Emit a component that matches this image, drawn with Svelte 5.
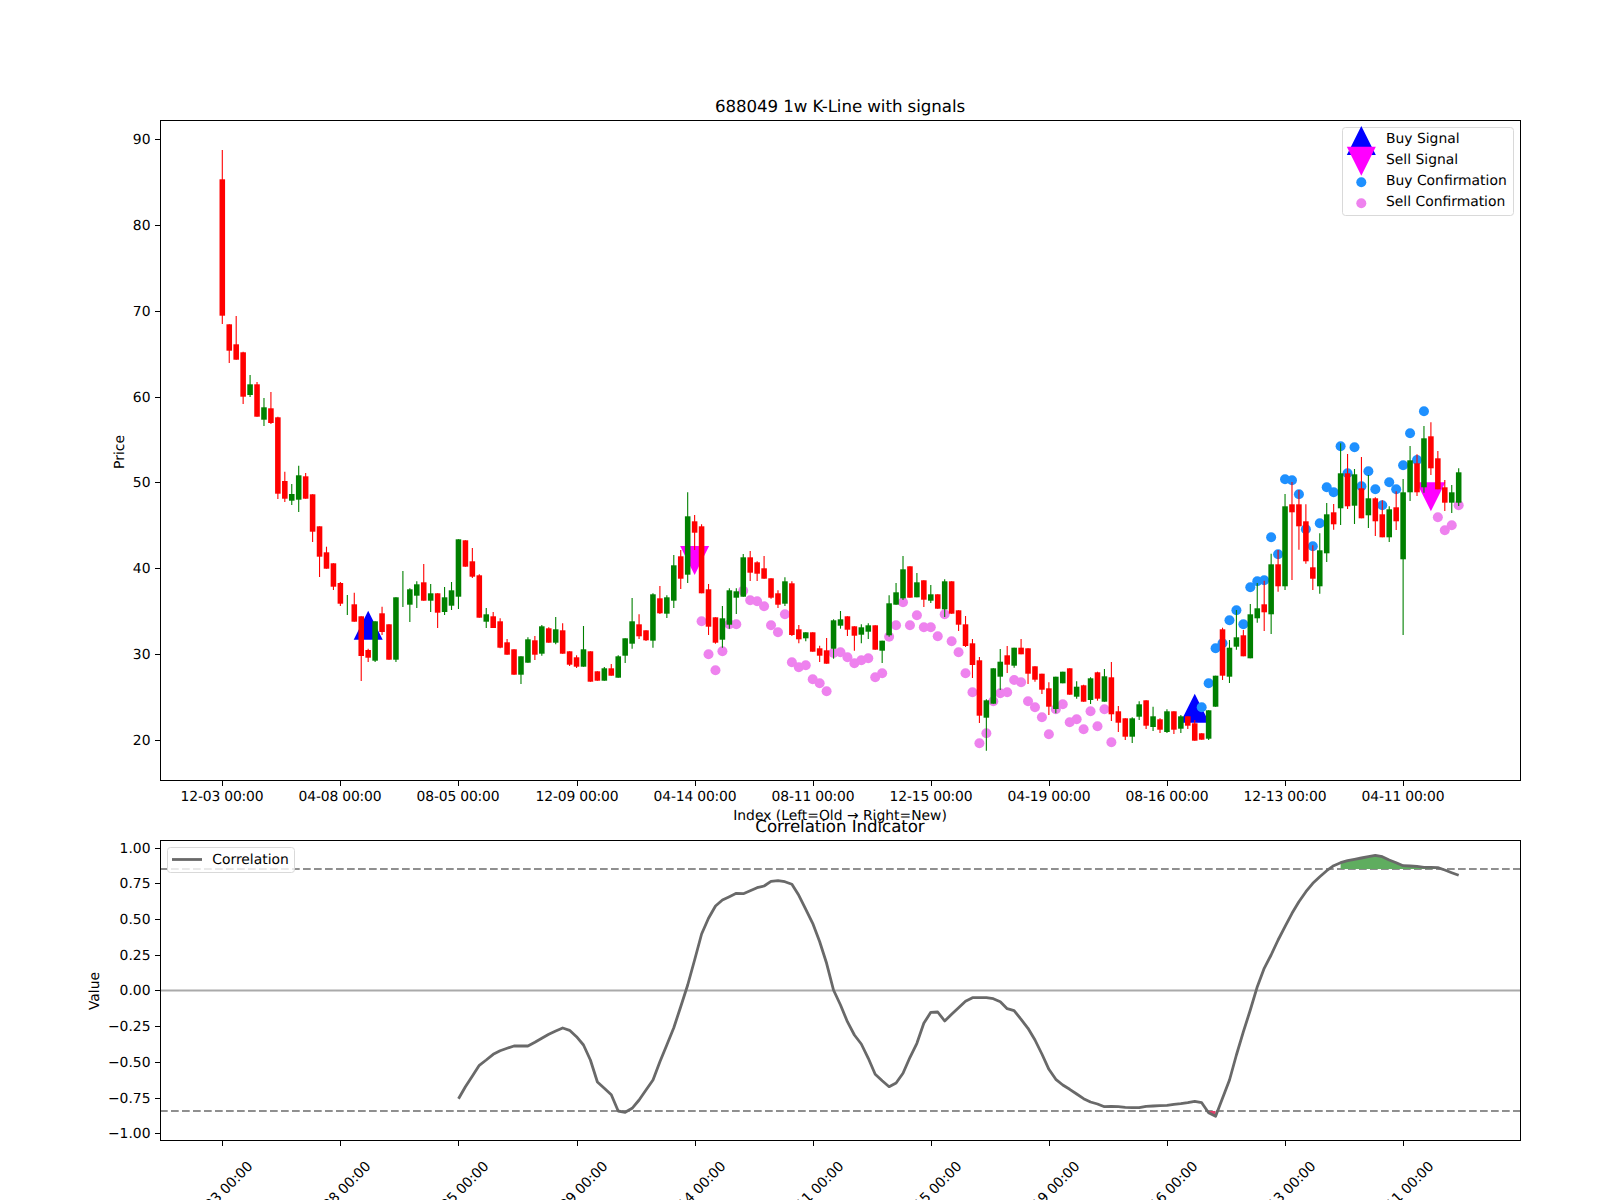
<script>
	// all series are in figure pixels, read off a 1600x1200 chart
	const X0 = 222.3;
	const STEP = 6.946;
	const BODY_W = 5.56;
	const x = (i) => X0 + STEP * i;

	// [colour, wick top, body top, body bottom, wick bottom]
	const candles = [
		['r',150,179.3,315.7,324],['r',324.3,324.3,350.7,363],['r',316,344.3,359.7,359.7],['r',351.7,352.3,396.7,404],
		['g',375,384.3,395,397],['r',382,384.3,416.7,416.7],['g',398,407.3,419.7,426],['r',392,408.3,423,424],
		['r',416.7,417.3,493.7,499],['r',471.7,481,498.7,502],['g',484,494,500.7,505],['g',465.7,475.3,499.7,512],
		['r',473,476.3,498.7,498.7],['r',494.3,494.3,531.7,542],['r',526.3,526.3,556.7,577],['r',546.7,552.3,568.7,568.7],
		['r',563.3,563.3,586.7,590],['r',582,583,603.7,606],['g',595,605,605,615],['r',592.7,604.3,621.7,621.7],
		['r',616.3,616.3,656,681],['r',648.7,650,657.7,662],['g',621.3,621.3,660.7,662],['r',606.7,613.3,632,635],
		['r',624.3,624.3,659.7,659.7],['g',597.3,597.3,659.7,662],['g',571,590,590,607],['g',588.3,589.3,604.7,622],
		['g',581.3,584.3,595.7,608],['r',564,582.3,600.7,600.7],['g',584,593.3,600.7,612],['r',593.3,593.3,612.7,628],
		['g',587,597.3,612,615],['g',582,590.3,605.7,610],['g',539.3,539.3,596.7,609],['r',540.3,540.3,566.7,566.7],
		['r',548,561.3,576.7,578],['r',574.3,575.3,617.7,617.7],['g',608,614.3,621.7,628],['r',612,616.3,628,628],
		['r',618.3,621.3,647.7,648.3],['r',639,642.3,654.7,654.7],['r',649.3,649.3,674.7,674.7],['g',656.3,656.3,674.7,684],
		['g',637.3,639.3,662.7,662.7],['r',636,640.3,654.7,660],['g',625,626.3,653.7,655.7],['r',627.3,628.3,642.7,642.7],
		['g',617,629.3,642.7,644.3],['r',623.3,630.3,653.7,653.7],['r',651.3,651.3,664.7,666],['r',655.3,657.3,666.7,668],
		['g',626,649.3,666.7,666.7],['r',651.3,651.3,681.7,681.7],['r',671.3,671.3,680.7,680.7],['g',667,668.3,680.7,680.7],
		['r',664,668.3,675.7,675.7],['g',655.3,656.3,677.7,677.7],['g',638.3,638.3,655.7,663],['g',598,621.3,643.7,648.7],
		['r',614.3,624.3,636.3,639],['r',630.3,630.3,640.3,641],['g',593.3,594.3,640.7,647.7],['r',586,598.3,613.3,614],
		['g',595.3,597.3,613.7,618],['g',555,565.3,600.7,608],['r',550,556.3,578.7,589],['g',492.3,516.3,574.7,583],
		['r',515,521.3,532.7,550],['r',524.3,526.3,593.3,593.3],['r',584,589.3,626.7,635],['r',617.3,617.3,642.7,643.7],
		['g',606,618.3,639.7,647.7],['g',588.3,590.3,624.7,628.7],['g',588.3,591.3,597.7,614],['g',554,557.3,596.7,596.7],
		['r',551,557.3,572.7,581],['r',561.3,562.3,573.7,581],['r',556,568.3,578.7,578.7],['r',578.3,578.3,597.7,598.7],
		['r',590.3,593.3,604.7,608],['g',577.3,581.3,603.7,606],['r',581.3,583.3,635,636],['r',625,629.3,639.3,643.3],
		['g',632.3,632.3,638.3,641.3],['r',632.3,632.3,651.7,651.7],['r',645.7,648.3,655.7,662],['r',638,650.3,663.7,663.7],
		['g',619.3,620.3,648.7,658.7],['g',611,619.3,625.7,628.7],['r',616.3,616.3,629.7,636],['r',626.3,626.3,635.7,650.7],
		['g',624.3,627.3,634.7,643.3],['g',623.3,625.3,631.7,639],['r',625.3,625.3,649.7,649.7],['g',640.7,640.7,650.7,663],
		['g',595.3,603.3,635.3,636.7],['g',583,592.3,604.7,604.7],['g',556,569.3,598.3,600],['r',566.3,566.3,597.7,597.7],
		['g',573,582.3,597.3,597.3],['r',580.3,580.3,599.7,607],['g',585,594.3,600.7,603],['r',594.3,594.3,608.7,608.7],
		['g',579.3,581.3,609.3,617],['r',581.3,581.3,613.7,613.7],['r',610.3,610.3,624.7,631],['r',616,624.3,646,647],
		['r',639,643.3,665,678],['r',657,660.3,715.7,723],['g',699.3,700.3,717.7,750.7],['g',668.3,668.3,703.7,703.7],
		['g',649,661.7,676.7,690],['r',646,655.3,664.7,673],['g',647.7,647.7,665.7,667.7],['r',639,647.7,654.3,654.3],
		['r',648.3,648.3,673.7,684],['r',666.3,666.3,679.7,681.7],['r',673.7,673.7,689.7,694],['r',682.3,688.3,706.7,715],
		['g',676.7,676.7,709,713.3],['g',671.7,671.7,683.3,683.3],['r',668.3,668.3,694.7,694.7],['g',681.3,686.7,696.7,698.7],
		['r',684.7,685.3,701.7,701.7],['g',677.3,678.3,700,704],['r',671.7,672.3,698.7,700.7],['g',669,676.3,701.7,701.7],
		['r',662,677.3,714.3,721],['r',706,711.3,722.7,732],['r',718.3,718.3,736.7,740],['g',717.3,718.3,736.7,743],
		['g',701.3,704.3,716.7,720],['r',700.3,700.3,725.7,729],['g',706.7,716.3,727,731],['r',718.3,719.3,729.7,733],
		['g',709.3,711.3,732,733],['r',711.3,711.3,729.7,734],['g',715,716.3,728.7,733],['r',716.3,716.3,725.7,729],
		['r',720,723.3,740.7,740.7],['r',733.3,733.3,739.7,739.7],['g',710.3,710.3,738.7,740],['g',675.7,675.7,706.7,706.7],
		['r',627.7,629.3,675.7,680],['g',640,647.7,676.7,683],['g',610,637.3,646.7,649.7],['r',630,635.3,656.3,656.3],
		['g',604,614.3,658.3,658.3],['g',583,608.3,618.3,622.7],['r',580.7,604.3,612.3,631],['g',553.7,564.3,614.3,634],
		['r',550,564.3,586.3,591.7],['g',494,506.3,586.3,590],['r',482,504.3,512.3,580],['r',490,504.3,526.3,549.7],
		['r',504.3,521.3,561.3,563.7],['r',545.3,567.3,578.7,590],['g',533.3,550.3,586.3,593.7],['g',503,514.3,553.3,562],
		['r',504,512.3,524.3,529.7],['g',443.3,473.3,508.3,525],['r',454,473.3,506.3,509],['g',469,474.3,505.7,524],
		['r',457,488.3,518.3,518.3],['g',475,498.3,515.3,528],['r',497.3,498.3,521.3,536],['r',500.3,514.3,537.3,537.3],
		['g',506.3,509.3,537.3,542],['r',491.3,507.3,521.3,530],['g',479,492.3,559.3,635],['g',446,460.3,492.3,501],
		['r',454.3,463.3,492.3,496],['g',426,438.3,487.3,492.7],['r',422.3,436.3,468.3,475],['r',451,458.3,489.3,489.3],
		['r',480,487.3,502.7,511],['g',485,492.3,502.7,513],['g',468.3,472.3,502.7,506]
	];

	const sellConfirm = [
		621.3,654.3,670.3,651.3,624.3,624.3,590.7,600.3,601.3,606.3,625.3,632.3,614.3,662.3,667.3,665.3,679.3,683.3,691.3,653,
		652.3,657.3,663.3,660.3,658.3,677.3,673.3,636.7,625.3,602.3,625.3,615.3,627.3,627.3,636.3,614.3,641.3,652.3,673.3,692.3,
		743.3,733.3,701.3,693.3,692.3,680,682.3,701.3,707.3,717.3,734.3,709.3,704.3,722.3,719.3,729.3,711.3,726.3,709.3,742.3
	];
	const buyConfirm = [
		707.3,683.3,648.3,643.3,620.3,610.3,624.3,587.3,581.3,580.3,537.3,554.3,479.3,480.3,494.3,529.3,546.3,523.3,487.3,492.3,
		446.3,473.3,447.3,486.3,471.3,489.3,505.3,482.3,489.3,465.3,433.3,460,411.3
	];
	const lateSell = [517.3, 530.3, 525.3, 505.3];

	const corrStart = 34;
	const corr = [
		1098.7,1086.7,1076,1065.3,1060,1054.3,1050.7,1048.3,1046,1046,1046,1042.3,1038.3,1034.3,1031,1028,1030.3,1036.7,1045,1060,
		1082,1088.3,1094.7,1111,1112.3,1108.3,1100,1090,1080,1061.7,1045,1027.7,1006.7,985,960,934,918.3,906,900,896.7,
		893.3,893.7,890.7,887.7,886,881.3,880.7,881.7,884.3,895.3,909.3,923.3,941.7,963.3,990,1005,1021.7,1035,1044,1058.3,
		1074.3,1080.7,1086.7,1083,1073.3,1057.3,1043.3,1023.3,1012.3,1012,1021,1014.3,1007.7,1001.3,997.7,997.7,997.7,998.7,1001.7,1008.7,
		1010.7,1019.3,1028.3,1040,1054,1069.3,1079.3,1085,1089.3,1094,1098.7,1102,1104,1106.7,1106.3,1106.7,1107.3,1107.7,1107.7,1106.3,
		1106,1105.7,1105.3,1104.3,1103.7,1102.7,1101.3,1102.7,1112.7,1116.3,1098.3,1080,1055,1031.7,1010,986.7,968.3,955,940,926.7,
		913.3,901.7,891.7,883.3,876.7,870.7,865.7,862.7,860.7,859.3,858,856.7,855.3,856.7,860,862.7,865.7,866,866.3,867.3,
		867.3,867.7,870,872.7,875.3
	];

	const corrXY = corr.map((y, n) => [x(corrStart + n), y]);
	const corrPath = corrXY.map(([a, b]) => `${a.toFixed(1)},${b}`).join(' ');

	const HI = 869;
	const LO = 1111;
	const band = (from, to, base) => {
		const pts = corrXY.slice(from - corrStart, to - corrStart + 1);
		const top = pts.map(([a, b]) => `${a.toFixed(1)},${b}`);
		return [...top, `${pts[pts.length - 1][0].toFixed(1)},${base}`, `${pts[0][0].toFixed(1)},${base}`].join(' ');
	};
	const overbought = band(161, 175, HI);
	const oversold = band(142, 143, LO);

	const dates = ['12-03', '04-08', '08-05', '12-09', '04-14', '08-11', '12-15', '04-19', '08-16', '12-13', '04-11'];
	const xTicks = dates.map((d, k) => ({ label: `${d} 00:00`, x: Math.round(x(k * 17)) + 0.5 }));

	const priceTicks = [90, 80, 70, 60, 50, 40, 30, 20].map((p) => ({
		label: String(p),
		y: Math.round(139.3 + (90 - p) * 8.575) + 0.5
	}));
	const corrTicks = ['1.00', '0.75', '0.50', '0.25', '0.00', '−0.25', '−0.50', '−0.75', '−1.00'].map((label, k) => ({
		label,
		y: Math.round(847.6 + k * 35.72) + 0.5
	}));

	const tri = (cx, cy, half, dir) =>
		`${cx},${cy - dir * half} ${cx - half},${cy + dir * half} ${cx + half},${cy + dir * half}`;

	const colour = { r: '#ff0000', g: '#008000' };
</script>

<div class="chart">
	<svg width="1600" height="1200" viewBox="0 0 1600 1200">
		<!-- price panel -->
		<polygon class="buy" points={tri(x(21), 625.2, 14.5, 1)} />
		<polygon class="buy" points={tri(x(140), 708.3, 14.5, 1)} />
		<polygon class="sell" points={tri(x(68), 560.5, 14.5, -1)} />
		<polygon class="sell" points={tri(x(174), 496.7, 14.5, -1)} />

		{#each buyConfirm as y, n}
			<circle class="dot-buy" cx={x(141 + n)} cy={y} r="5" />
		{/each}
		{#each sellConfirm as y, n}
			<circle class="dot-sell" cx={x(69 + n)} cy={y} r="5" />
		{/each}
		{#each lateSell as y, n}
			<circle class="dot-sell" cx={x(175 + n)} cy={y} r="5" />
		{/each}

		{#each candles as [c, wt, bt, bb, wb], i}
			<line x1={x(i)} x2={x(i)} y1={wt} y2={wb} stroke={colour[c]} stroke-width="1.1" />
			{#if bb > bt}
				<rect x={x(i) - BODY_W / 2} y={bt} width={BODY_W} height={bb - bt} fill={colour[c]} />
			{/if}
		{/each}

		<rect class="frame" x="160.5" y="120.5" width="1360" height="660" />
		{#each priceTicks as t}
			<line class="tick" x1="155" x2="160" y1={t.y} y2={t.y} />
			<text class="end" x="150.5" y={t.y + 4}>{t.label}</text>
		{/each}
		{#each xTicks as t}
			<line class="tick" x1={t.x} x2={t.x} y1="781" y2="786" />
			<text class="mid date" x={t.x - 0.5} y="801">{t.label}</text>
		{/each}

		<text class="mid title" x="840" y="111.7">688049 1w K-Line with signals</text>
		<text class="mid" x="840" y="820">Index (Left=Old → Right=New)</text>
		<text class="mid" transform="translate(124 452) rotate(-90)">Price</text>

		<!-- legend -->
		<rect class="legend-box" x="1342.5" y="127.5" width="171" height="88" rx="3" />
		<polygon class="buy" points={tri(1361.3, 140.4, 14.5, 1)} />
		<polygon class="sell" points={tri(1361.3, 161.3, 14.5, -1)} />
		<circle class="dot-buy" cx="1361.3" cy="182.3" r="5" />
		<circle class="dot-sell" cx="1361.3" cy="203.3" r="5" />
		<text x="1386" y="143.3">Buy Signal</text>
		<text x="1386" y="164">Sell Signal</text>
		<text x="1386" y="185">Buy Confirmation</text>
		<text x="1386" y="205.8">Sell Confirmation</text>

		<!-- correlation panel -->
		<line class="zero" x1="160" x2="1520" y1="990.5" y2="990.5" />
		<line class="limit" x1="160" x2="1520" y1={HI} y2={HI} />
		<line class="limit" x1="160" x2="1520" y1={LO} y2={LO} />
		<polygon class="fill-high" points={overbought} />
		<polygon class="fill-low" points={oversold} />
		<polyline class="corr" points={corrPath} />

		<rect class="frame" x="160.5" y="840.5" width="1360" height="300" />
		{#each corrTicks as t}
			<line class="tick" x1="155" x2="160" y1={t.y} y2={t.y} />
			<text class="end" x="150.5" y={t.y + 4}>{t.label}</text>
		{/each}
		{#each xTicks as t}
			<line class="tick" x1={t.x} x2={t.x} y1="1141" y2="1146" />
			<text class="mid date" transform="translate({t.x - 2} 1193) rotate(-45)" y="5">{t.label}</text>
		{/each}

		<text class="mid title" x="840" y="831.7">Correlation Indicator</text>
		<text class="mid" transform="translate(99 991) rotate(-90)">Value</text>

		<rect class="legend-box faint" x="167.5" y="847.5" width="127" height="25" rx="3" />
		<line class="corr" x1="172" x2="202" y1="859.5" y2="859.5" />
		<text x="212.3" y="864.3">Correlation</text>
	</svg>
</div>

<style>
	:global(body) {
		margin: 0;
		background: #ffffff;
		overflow: hidden;
	}

	.chart {
		width: 1600px;
		height: 1200px;
		background: #ffffff;
		overflow: hidden;
	}

	svg {
		display: block;
	}

	text {
		font-family: 'DejaVu Sans', sans-serif;
		font-size: 13.89px;
		fill: #000000;
		text-rendering: geometricPrecision;
	}

	.end {
		text-anchor: end;
	}

	.mid {
		text-anchor: middle;
	}

	.date {
		letter-spacing: -0.17px;
	}

	.title {
		font-size: 16.67px;
		letter-spacing: -0.07px;
	}

	.frame {
		fill: none;
		stroke: #000000;
		stroke-width: 1;
		shape-rendering: crispEdges;
	}

	.tick {
		stroke: #000000;
		stroke-width: 1;
		shape-rendering: crispEdges;
	}

	.buy {
		fill: #0000ff;
	}

	.sell {
		fill: #ff00ff;
	}

	.dot-buy {
		fill: #1e90ff;
	}

	.dot-sell {
		fill: #ee82ee;
	}

	.legend-box {
		fill: #ffffff;
		fill-opacity: 0.8;
		stroke: #d9d9d9;
		stroke-width: 1;
	}

	.zero {
		stroke: #aaaaaa;
		stroke-width: 2;
	}

	.limit {
		stroke: #8f8f8f;
		stroke-width: 2;
		stroke-dasharray: 7.7 3.3;
	}

	.fill-high {
		fill: #5fad5f;
	}

	.fill-low {
		fill: #e0406a;
	}

	.corr {
		fill: none;
		stroke: #696969;
		stroke-width: 2.8;
		stroke-linejoin: round;
	}
</style>
